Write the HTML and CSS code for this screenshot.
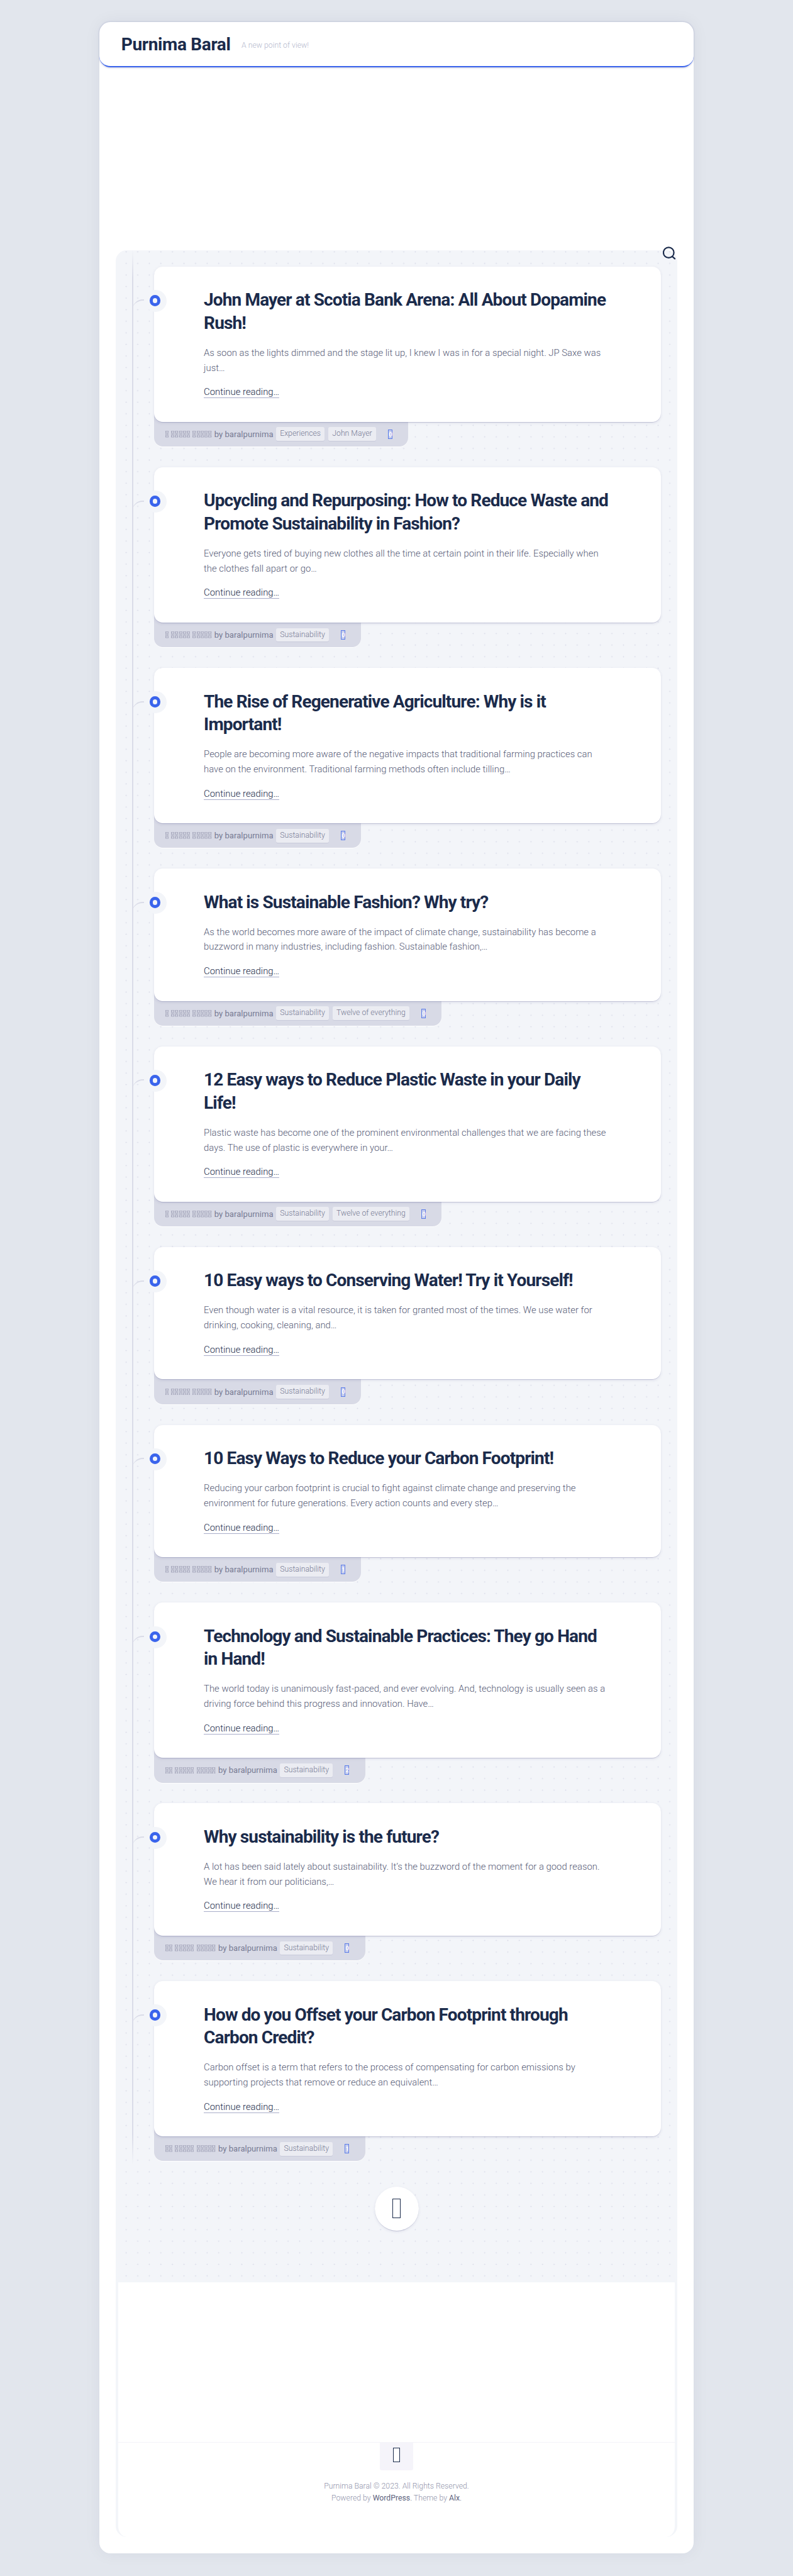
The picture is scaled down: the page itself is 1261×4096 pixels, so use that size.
FILE: index.html
```html
<!DOCTYPE html>
<html lang="en">
<head>
<meta charset="utf-8">
<title>Purnima Baral</title>
<link rel="stylesheet" href="styles.css">
</head>
<body>
<div class="wrapper">
  <header class="header">
    <h1 class="site-title">Purnima Baral</h1>
    <p class="tagline">A new point of view!</p>
  </header>
  <div class="container">
    <svg class="search" viewBox="0 0 24 24" aria-hidden="true"><circle cx="10.6" cy="11" r="9.5"/><path d="M17.5 18.4 L21.8 22.2"/></svg>
    <main class="content" id="posts"></main>
    <footer class="footer">
      <div class="footer-bottom">
        <a class="to-top"><i class="box box-md"></i></a>
        <p class="copy">Purnima Baral © 2023. All Rights Reserved.</p>
        <p class="copy">Powered by <a>WordPress</a><b>.</b> Theme by <a>Alx</a><b>.</b></p>
      </div>
    </footer>
  </div>
</div>
<script src="posts.js"></script>
</body>
</html>
```
FILE: posts.js
```js
const posts = [
  ["John Mayer at Scotia Bank Arena: All About Dopamine|Rush!", "As soon as the lights dimmed and the stage lit up, I knew I was in for a special night. JP Saxe was|just…", 1, ["Experiences", "John Mayer"], 0],
  ["Upcycling and Repurposing: How to Reduce Waste and|Promote Sustainability in Fashion?", "Everyone gets tired of buying new clothes all the time at certain point in their life. Especially when|the clothes fall apart or go…", 1, ["Sustainability"], 0],
  ["The Rise of Regenerative Agriculture: Why is it|Important!", "People are becoming more aware of the negative impacts that traditional farming practices can|have on the environment. Traditional farming methods often include tilling…", 1, ["Sustainability"], 0],
  ["What is Sustainable Fashion? Why try?", "As the world becomes more aware of the impact of climate change, sustainability has become a|buzzword in many industries, including fashion. Sustainable fashion,…", 1, ["Sustainability", "Twelve of everything"], 0],
  ["12 Easy ways to Reduce Plastic Waste in your Daily|Life!", "Plastic waste has become one of the prominent environmental challenges that we are facing these|days. The use of plastic is everywhere in your…", 1, ["Sustainability", "Twelve of everything"], 0],
  ["10 Easy ways to Conserving Water! Try it Yourself!", "Even though water is a vital resource, it is taken for granted most of the times. We use water for|drinking, cooking, cleaning, and…", 1, ["Sustainability"], 0],
  ["10 Easy Ways to Reduce your Carbon Footprint!", "Reducing your carbon footprint is crucial to fight against climate change and preserving the|environment for future generations. Every action counts and every step…", 1, ["Sustainability"], 1],
  ["Technology and Sustainable Practices: They go Hand|in Hand!", "The world today is unanimously fast-paced, and ever evolving. And, technology is usually seen as a|driving force behind this progress and innovation. Have…", 2, ["Sustainability"], 2],
  ["Why sustainability is the future?", "A lot has been said lately about sustainability. It’s the buzzword of the moment for a good reason.|We hear it from our politicians,…", 2, ["Sustainability"], 0],
  ["How do you Offset your Carbon Footprint through|Carbon Credit?", "Carbon offset is a term that refers to the process of compensating for carbon emissions by|supporting projects that remove or reduce an equivalent…", 2, ["Sustainability"], 1]
];
const glyphs = n => `<span class="word">${'<svg class="glyph" viewBox="0 0 6 12"><path d="M.5 .5H5.5V11.5H.5Z M.5 .5L5.5 11.5 M5.5 .5L.5 11.5"/></svg>'.repeat(n)}</span>`;
const lines = s => s.split("|").join("<br>");
document.getElementById("posts").innerHTML = posts.map(([title, text, n, tags, count]) => `
  <article class="post">
    <span class="branch"></span><span class="marker"></span>
    <div class="card">
      <h2 class="title">${lines(title)}</h2>
      <p class="excerpt">${lines(text)}</p>
      <p class="more"><a>Continue reading…</a></p>
    </div>
    <div class="meta">
      ${glyphs(n)}${glyphs(5)}${glyphs(5)}<span class="by">by baralpurnima</span>
      ${tags.map(t => `<a class="tag">${t}</a>`).join("")}
      <span class="count"><i class="box box-sm"></i><b>${count}</b></span>
    </div>
  </article>`).join("") + '<a class="next"><i class="box box-lg"></i></a>';
```
FILE: styles.css
```css
/* 1rem is 10 units of a 1440-unit wide layout */
html { font-size: calc(100vw / 143.96); }
*, *::before { box-sizing: border-box; }
body {
  margin: 0;
  padding: 4rem 18rem 4rem;
  background: #e2e6ed;
  font-family: Roboto, "Liberation Sans", sans-serif;
  font-weight: 300;
  color: #585d78;
}
h1, h2, p { margin: 0; }
.wrapper {
  height: 459.5rem;
  background: #fff;
  border-radius: 2rem;
  box-shadow: 0 0 3rem rgba(0, 0, 60, .06);
}
.header {
  display: flex;
  align-items: baseline;
  height: 8.2rem;
  padding: 2.15rem 4rem 0;
  border-bottom: .23rem solid #3a64ec;
  border-radius: 2rem;
  box-shadow: 0 .1rem .3rem rgba(50, 60, 140, .3);
}
.site-title {
  font-size: 3.2rem;
  line-height: 3.8rem;
  font-weight: 700;
  letter-spacing: -.04rem;
  color: #1b2b4b;
}
.tagline { margin-left: 2rem; font-size: 1.4rem; color: #b4b8cd; position: relative; top: -.4rem; }
.container {
  position: relative;
  margin: 33.2rem 3rem 0;
  height: 415.1rem;
}
.search {
  position: absolute;
  top: -.65rem;
  right: .2rem;
  width: 2.4rem;
  height: 2.4rem;
  fill: none;
  stroke: #1b2b4b;
  stroke-width: 2.5;
  stroke-linecap: round;
  z-index: 3;
}
.content {
  position: relative;
  z-index: 0;
  height: 368.9rem;
  padding: 3rem 3rem 0 7rem;
  border-radius: 2rem 2rem 0 0;
  background: radial-gradient(circle, #d9dbe8 .1rem, transparent .12rem) .85rem -.77rem / 2.1rem 2.1rem #f3f5f9;
}
.content::before {
  content: "";
  position: absolute;
  left: 3rem;
  top: 0;
  width: .23rem;
  height: 347.5rem;
  background: linear-gradient(transparent, #dadce8 5rem, #dadce8 342rem, transparent);
}
.post { position: relative; margin-bottom: 3.76rem; }
.card {
  position: relative;
  z-index: 1;
  padding: 4.05rem 9rem 3.95rem;
  background: #fff;
  border-radius: 1.6rem;
  box-shadow: 0 .1rem 0 rgba(70, 75, 130, .22), 0 .2rem .5rem rgba(70, 75, 130, .12);
  white-space: nowrap;
}
.marker {
  position: absolute;
  z-index: 2;
  left: -1.75rem;
  top: 4.25rem;
  width: 4rem;
  height: 4rem;
  border: 1rem solid #f3f5f9;
  border-radius: 50%;
  background: #f3f5f9;
}
.marker::before {
  content: "";
  display: block;
  width: 2rem;
  height: 2rem;
  border: .58rem solid #3a64ec;
  border-radius: 50%;
}
.branch {
  position: absolute;
  left: -4rem;
  top: 6rem;
  width: 2.2rem;
  height: 2rem;
  border-top: .23rem solid #dadce8;
  border-top-left-radius: 2rem;
  z-index: 2;
}
.title {
  font-size: 3.2rem;
  line-height: 1.3;
  font-weight: 700;
  letter-spacing: -.1rem;
  color: #1b2b4b;
}
.excerpt { margin-top: 2rem; font-size: 1.7rem; line-height: 1.6; }
.more { margin-top: 1.7rem; font-size: 1.7rem; line-height: 1.6; }
.more a { color: #1b2b4b; border-bottom: 1px solid #a9adc9; }
.meta {
  display: flex;
  align-items: center;
  width: max-content;
  height: 6.5rem;
  margin-top: -2rem;
  padding: 2rem 2.9rem 0 2rem;
  background: #d8dae6;
  border-radius: 0 0 1.6rem 1.6rem;
  box-shadow: 0 .1rem 0 #fff;
  color: #777b94;
}
.word { display: flex; gap: .11rem; margin-right: .48rem; }
.glyph { width: .6rem; height: 1.2rem; fill: none; stroke: #9598ae; stroke-width: .7; }
.by { font-size: 1.5rem; font-weight: 400; margin-right: .5rem; }
.tag {
  height: 2.5rem;
  margin-right: .68rem;
  padding: 0 .7rem;
  border-radius: .3rem;
  background: #ebecf2;
  box-shadow: 0 .1rem 0 #c9cbdb;
  font-size: 1.4rem;
  line-height: 2.5rem;
}
.box { display: block; border: .1rem solid #1b2b4b; }
.count { position: relative; margin-left: 1.5rem; }
.box-sm { width: .8rem; height: 1.7rem; border: 1px solid #5b7de9; background: #c7cdec; }
.count b {
  position: absolute;
  left: .15rem;
  top: .2rem;
  font-size: 1.1rem;
  line-height: 1.3rem;
  font-weight: 600;
  color: #fff;
}
.next {
  display: flex;
  align-items: center;
  justify-content: center;
  width: 8rem;
  height: 8rem;
  margin: 4.6rem 0 0 40rem;
  border-radius: 50%;
  background: #fff;
  box-shadow: 0 .1rem 0 rgba(70, 75, 130, .2), 0 .2rem .5rem rgba(70, 75, 130, .12);
}
.box-lg { width: 1.5rem; height: 3.5rem; border-width: .16rem; }
.footer {
  height: 46.2rem;
  padding-top: 29rem;
  border: solid #f3f5f9;
  border-width: 0 .5rem;
  border-radius: 0 0 2rem 2rem;
}
.footer-bottom {
  display: flex;
  flex-direction: column;
  align-items: center;
  border-top: 1px solid #f3f4f9;
}
.to-top {
  display: flex;
  justify-content: center;
  width: 6rem;
  height: 5rem;
  margin-bottom: 1.9rem;
  padding-top: .9rem;
  border-radius: 0 0 .4rem .4rem;
  background: #f5f4fa;
}
.box-md { width: 1.2rem; height: 2.6rem; border-width: 1px; background: #fff; }
.copy { font-size: 1.4rem; line-height: 2.1rem; color: #9194ab; }
.copy a { color: #5d627d; font-weight: 400; }
.copy b { color: #5d627d; font-weight: 300; }
```
